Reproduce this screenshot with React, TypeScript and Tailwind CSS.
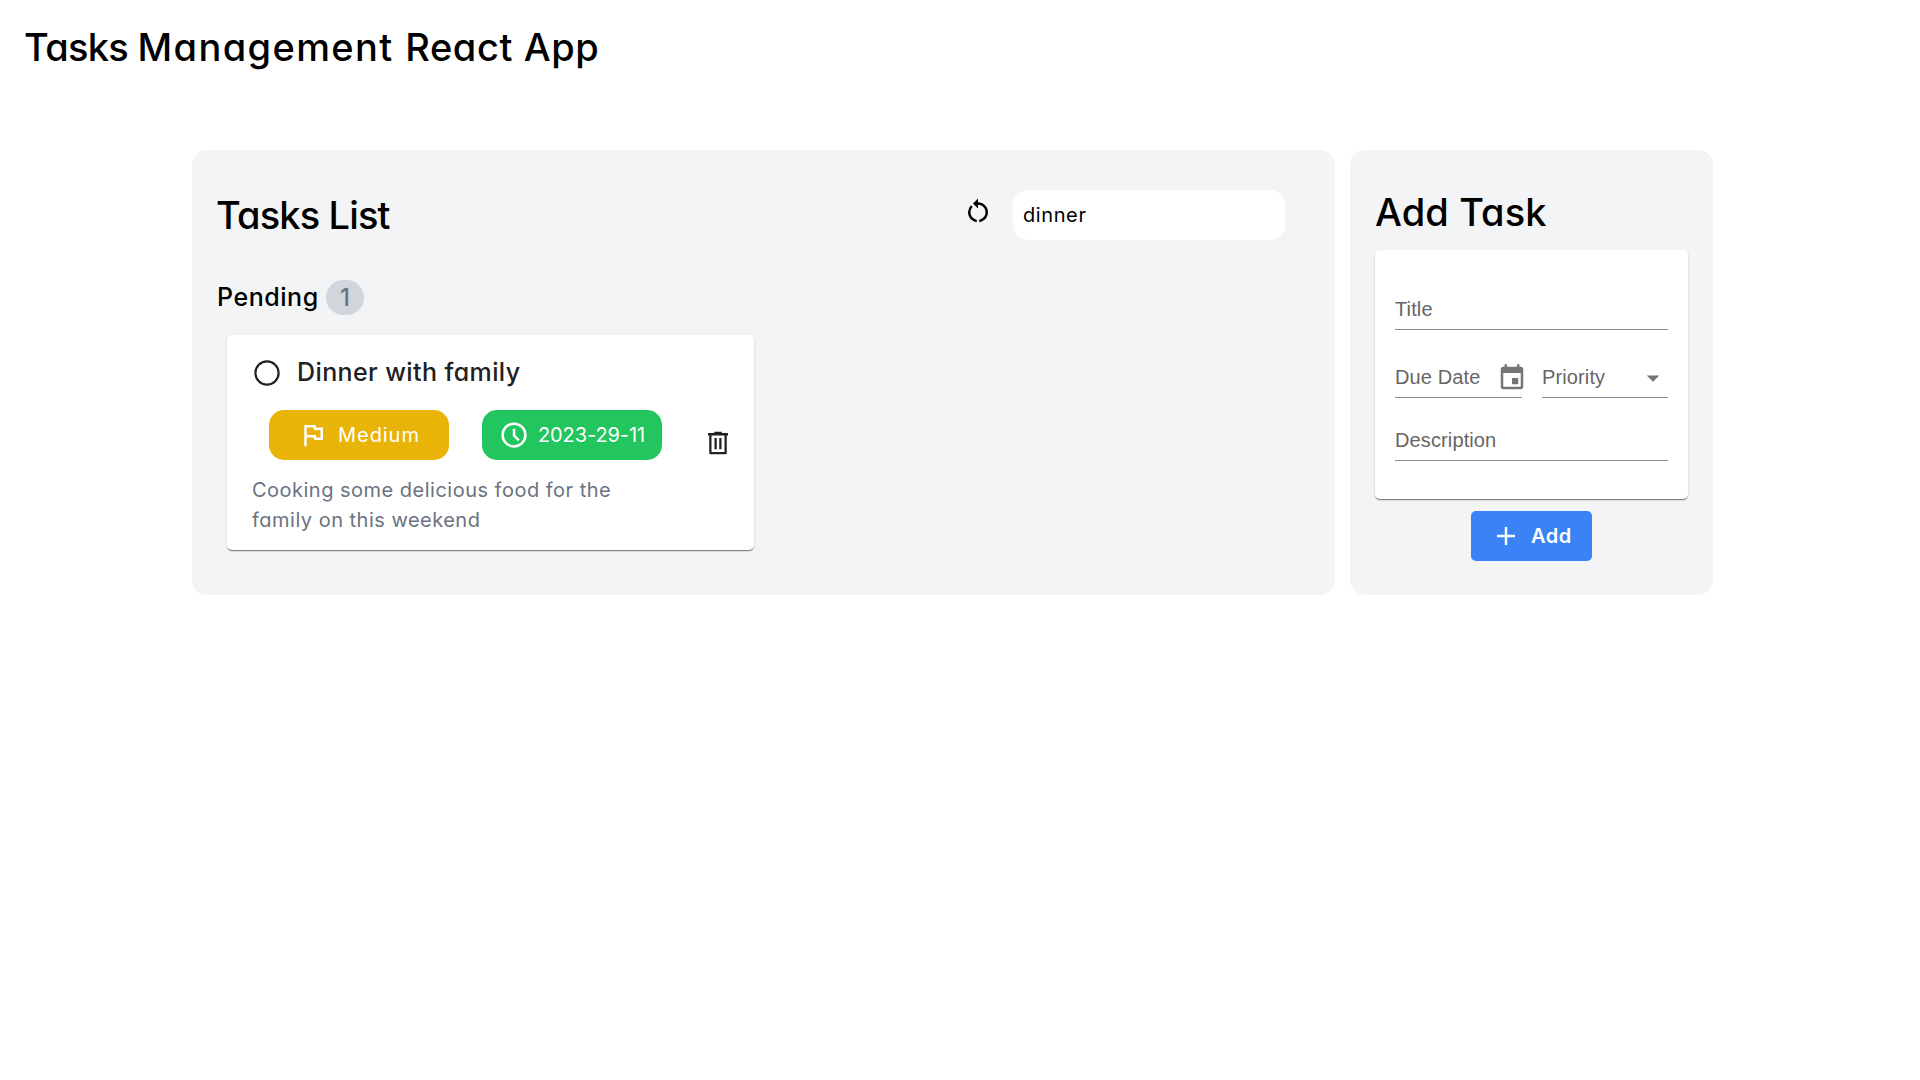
import type { ReactNode } from "react";
import { MdArrowDropDown, MdEvent, MdRestartAlt } from "react-icons/md";

function Chip({ className, children }: { className: string; children: ReactNode }) {
  return (
    <div className={`flex h-[50px] w-[180px] items-center rounded-[15px] text-[20px] leading-[30px] text-white ${className}`}>
      {children}
    </div>
  );
}

function FlagIcon() {
  return (
    <svg className="size-[30px] shrink-0" viewBox="0 0 24 24" fill="currentColor">
      <path d="M5 21V4h9l.4 2H20v10h-7l-.4-2H7v7H5Zm9.65-7H18V8h-5.25l-.4-2H7v6h7.25l.4 2Z" />
    </svg>
  );
}

function ClockIcon() {
  return (
    <svg className="size-[30px] shrink-0" viewBox="0 0 24 24" fill="none" stroke="currentColor" strokeWidth="2">
      <circle cx="12" cy="12" r="9.1" />
      <path d="M12 7v5.4l3.9 3.9" />
    </svg>
  );
}

function TrashIcon() {
  return (
    <svg className="size-[30px] shrink-0" viewBox="0 0 24 24" fill="currentColor">
      <path d="M5.8 21Q5 21 5 20.2V6H4V4h5V3h6v1h5v2h-1v14.2q0 .8-.8.8H5.8ZM17.2 6H6.8v13.2h10.4V6ZM9.2 17H11V8H9.2v9Zm3.8 0h1.8V8H13v9Z" />
    </svg>
  );
}

function Field({ label, className, children }: { label: string; className: string; children?: ReactNode }) {
  return (
    <div className={`flex h-10 items-center justify-between border-b border-[#8c8c8c] font-['Liberation_Sans',sans-serif] text-[20px] tracking-[0.12px] text-[#666666] ${className}`}>
      <span className="mb-[2px]">{label}</span>
      {children}
    </div>
  );
}

const card =
  "rounded-[5px] bg-white shadow-[0_2px_1px_-1px_rgba(0,0,0,0.3),0_1px_1px_0_rgba(0,0,0,0.2),0_1px_3px_0_rgba(0,0,0,0.12)]";

export default function App() {
  return (
    <div className="min-h-screen bg-white font-['Inter',sans-serif] text-black [font-feature-settings:'cv11']">
      <h1 className="pt-[25px] pl-[24px] text-[38px] leading-[45px] font-medium tracking-[0.6px]">
        <span className="tracking-[-0.7px]">Tasks </span>
        <span className="tracking-[1.4px]">Management </span>
        React App
      </h1>
      <main className="mt-[80px] ml-[192px] flex gap-[15px]">
        <section className="h-[445px] w-[1143px] rounded-[15px] bg-gray-100 px-[25px] pt-10">
          <div className="flex h-[50px] items-center">
            <h2 className="-ml-px flex-1 text-[38px] leading-[45px] font-medium tracking-[-0.85px]">Tasks List</h2>
            <MdRestartAlt className="mr-[20px] mb-[9px] size-[30px]" />
            <div className="mr-[25px] flex h-[50px] w-[272px] items-center rounded-[15px] bg-white pl-[10px] text-[20px] leading-[30px] tracking-[0.6px]">
              dinner
            </div>
          </div>
          <div className="mt-10 flex h-[35px] items-center">
            <h3 className="w-[102px] text-[25px] leading-[35px] font-medium tracking-[0.55px]">Pending</h3>
            <span className="ml-[7px] flex h-[35px] w-[38px] items-center justify-center rounded-full bg-gray-300 text-[24px] font-medium text-gray-500">
              1
            </span>
          </div>
          <article className={`mt-5 ml-[10px] flex h-[215px] w-[527px] items-center pl-[25px] ${card}`}>
            <div className="h-[215px] w-[410px] pt-[20px]">
              <div className="flex h-[35px] items-center text-[#212121]">
                <svg className="size-[30px]" viewBox="0 0 30 30" fill="none" stroke="currentColor" strokeWidth="2.2">
                  <circle cx="15" cy="15" r="11.6" />
                </svg>
                <h4 className="ml-[15px] text-[25px] leading-[35px] font-medium tracking-[0.4px] whitespace-nowrap">
                  Dinner with family
                </h4>
              </div>
              <div className="mt-5 ml-[17px] flex gap-[33px]">
                <Chip className="bg-[#eab308] pl-[29px]">
                  <FlagIcon />
                  <span className="ml-[10px] tracking-[0.95px]">Medium</span>
                </Chip>
                <Chip className="bg-[#22c55e] pl-[17px]">
                  <ClockIcon />
                  <span className="ml-[9px] tracking-[-0.1px]">2023-29-11</span>
                </Chip>
              </div>
              <p className="mt-[15px] text-[20px] leading-[30px] tracking-[0.49px] text-[#6b7280]">
                Cooking some delicious food for the
                <br />
                family on this weekend
              </p>
            </div>
            <div className="ml-[41px] text-[#212121]">
              <TrashIcon />
            </div>
          </article>
        </section>
        <aside className="flex h-[445px] w-[363px] flex-col rounded-[15px] bg-gray-100 px-[25px] pt-10">
          <h2 className="text-[38px] leading-[45px] font-medium tracking-[0.1px]">Add Task</h2>
          <div className={`mt-[15px] h-[249px] w-[313px] px-5 pt-10 ${card}`}>
            <Field label="Title" className="" />
            <div className="mt-[28px] flex gap-5">
              <Field label="Due Date" className="w-[127px]">
                <MdEvent className="-mr-[5px] size-[30px] shrink-0 text-[#757575]" />
              </Field>
              <Field label="Priority" className="w-[126px]">
                <MdArrowDropDown className="size-[30px] text-[#757575]" />
              </Field>
            </div>
            <Field label="Description" className="mt-[23px]" />
          </div>
          <button className="mt-[12px] flex h-[50px] w-[121px] items-center self-center rounded-[5px] bg-[#3b82f6] pl-[26px] text-[20px] leading-[30px] font-semibold text-white">
            <svg className="size-[18px]" viewBox="0 0 18 18" stroke="currentColor" strokeWidth="2.4">
              <path d="M9 0v18M0 9h18" />
            </svg>
            <span className="ml-[16px] tracking-[0.5px]">Add</span>
          </button>
        </aside>
      </main>
    </div>
  );
}
